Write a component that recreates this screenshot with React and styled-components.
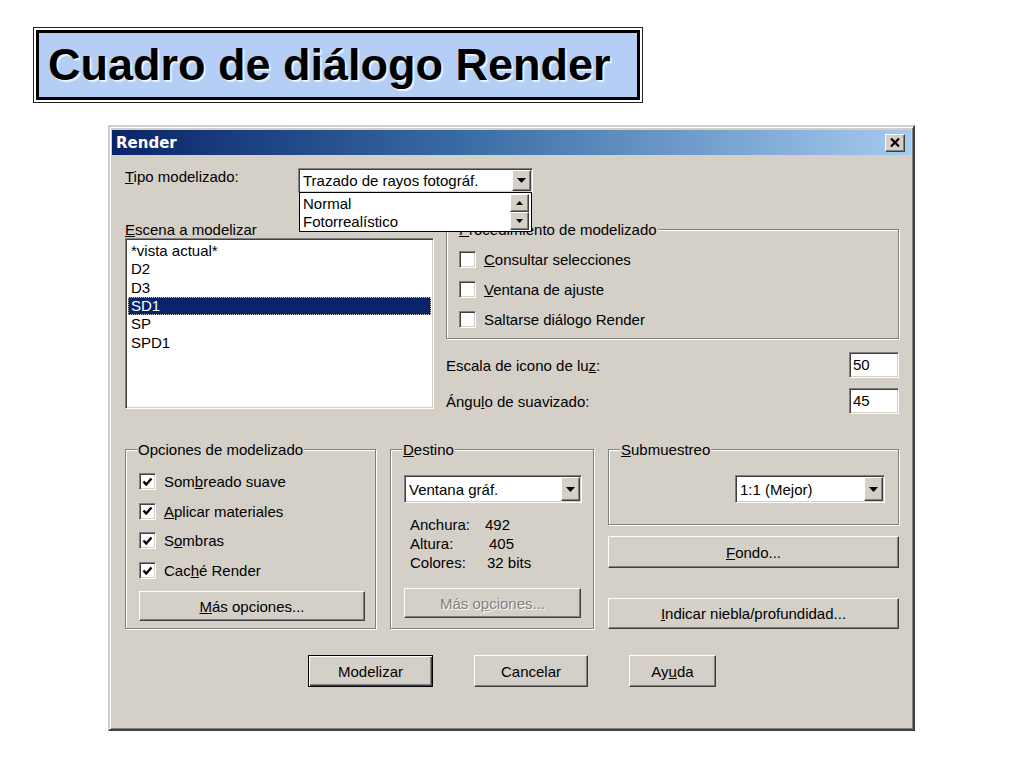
import React from 'react';
import styled, { createGlobalStyle } from 'styled-components';

const FACE = '#d4d0c8';

const GlobalStyle = createGlobalStyle`
  html, body {
    margin: 0;
    padding: 0;
    background: #fff;
  }
  body {
    font-family: "Liberation Sans", Arial, sans-serif;
    color: #000;
  }
`;

const raised = `
  background: ${FACE};
  border: 1px solid;
  border-color: #fff #404040 #404040 #fff;
  box-shadow: inset -1px -1px 0 #808080;
`;

const sunken = `
  background: #fff;
  border: 1px solid;
  border-color: #808080 #fff #fff #808080;
  box-shadow: inset 1px 1px 0 #404040, inset -1px -1px 0 ${FACE};
`;

const Page = styled.div`
  width: 1024px;
  height: 768px;
  overflow: hidden;
  box-sizing: border-box;
  padding: 30px 0 0 36px;
`;

const SlideTitle = styled.h1`
  margin: 0;
  width: 604px;
  height: 70px;
  box-sizing: border-box;
  background: #b4cef6;
  border: 3px solid #000;
  box-shadow: 0 0 0 2px #fff, 0 0 0 3px #222;
  padding: 9px 0 0 9px;
  font: bold 45px/45px "Liberation Sans", Arial, sans-serif;
  color: #000;
  white-space: nowrap;
  text-shadow: 1px 1px 0 #eef4ff, 2px 2px 1px rgba(255, 255, 255, 0.7);
`;

const Window = styled.div`
  margin: 25px 0 0 72px;
  width: 807px;
  height: 606px;
  box-sizing: border-box;
  background: ${FACE};
  border: 2px solid;
  border-color: ${FACE} #404040 #404040 ${FACE};
  box-shadow: inset 1px 1px 0 #fff, inset -1px -1px 0 #808080;
  padding: 2px;
  display: flex;
  flex-direction: column;
  font-size: 15px;
`;

const TitleBar = styled.div`
  height: 25px;
  margin-top: 1px;
  display: flex;
  align-items: center;
  justify-content: space-between;
  padding: 0 6px 0 4px;
  background: linear-gradient(90deg, #0a246a 0%, #3a6ea5 45%, #a6caf0 100%);
`;

const TitleText = styled.span`
  font: bold 15px "DejaVu Sans", Verdana, sans-serif;
  color: #fff;
`;

const CloseButton = styled.div`
  ${raised}
  width: 20px;
  height: 18px;
  box-sizing: border-box;
  display: flex;
  align-items: center;
  justify-content: center;
`;

const Body = styled.div`
  flex: 1;
  display: flex;
  flex-direction: column;
  padding: 13px 12px 0 13px;
`;

const TypeRow = styled.div`
  display: flex;
  align-items: flex-start;
  height: 24px;
`;

const FieldLabel = styled.span`
  display: block;
  line-height: 17px;
  width: ${p => (p.$width ? `${p.$width}px` : 'auto')};
  white-space: nowrap;
`;

const ComboBox = styled.div`
  ${sunken}
  position: relative;
  box-sizing: border-box;
  width: ${p => p.$width}px;
  height: ${p => p.$height}px;
  display: flex;
  padding: 1px;
  flex-shrink: 0;
`;

const ComboText = styled.span`
  flex: 1;
  display: flex;
  align-items: center;
  padding-left: 3px;
  white-space: nowrap;
  overflow: hidden;
`;

const ArrowButton = styled.div`
  ${raised}
  width: 19px;
  box-sizing: border-box;
  display: flex;
  align-items: center;
  justify-content: center;
`;

const DropList = styled.div`
  position: absolute;
  top: 100%;
  left: 0;
  width: 100%;
  height: 40px;
  box-sizing: border-box;
  background: #fff;
  border: 1px solid #000;
  display: flex;
  z-index: 3;
`;

const DropItems = styled.div`
  flex: 1;
  padding: 2px 0 0 3px;
  line-height: 18px;
`;

const ScrollColumn = styled.div`
  width: 19px;
  margin: 1px 2px 1px 0;
  display: flex;
  flex-direction: column;
`;

const ScrollButton = styled.div`
  ${raised}
  flex: 1;
  box-sizing: border-box;
  display: flex;
  align-items: center;
  justify-content: center;
`;

const Columns = styled.div`
  display: flex;
  align-items: flex-start;
  gap: 12px;
`;

const LeftColumn = styled.div`
  width: 309px;
`;

const SectionLabel = styled(FieldLabel)`
  margin-top: 29px;
`;

const ListBox = styled.div`
  ${sunken}
  height: 171px;
  box-sizing: border-box;
  padding: 3px 2px 2px 2px;
`;

const ListItem = styled.div`
  line-height: 18.33px;
  padding-left: 3px;
  white-space: nowrap;
  ${p =>
    p.$selected &&
    `
    background: #0a246a;
    color: #fff;
    outline: 1px dotted #c8c4bc;
    outline-offset: -1px;
  `}
`;

const RightColumn = styled.div`
  flex: 1;
  display: flex;
  flex-direction: column;
`;

const Group = styled.div`
  position: relative;
  box-sizing: border-box;
  height: ${p => p.$height}px;
  margin-top: ${p => p.$top || 0}px;
  border: 1px solid #808080;
  box-shadow: inset 1px 1px 0 #fff, 1px 1px 0 #fff;
  padding: ${p => p.$pad};
  display: flex;
  flex-direction: column;
`;

const GroupLabel = styled.span`
  position: absolute;
  top: -9px;
  left: 11px;
  padding: 0 1px;
  background: ${FACE};
  line-height: 17px;
  white-space: nowrap;
`;

const CheckList = styled.div`
  display: flex;
  flex-direction: column;
  gap: ${p => p.$gap}px;
`;

const CheckRow = styled.label`
  display: flex;
  align-items: center;
  gap: 8px;
  height: 17px;
  white-space: nowrap;
`;

const CheckBox = styled.span`
  ${sunken}
  width: 17px;
  height: 17px;
  box-sizing: border-box;
  display: flex;
  align-items: center;
  justify-content: center;
  flex-shrink: 0;
`;

const ValueRow = styled.div`
  display: flex;
  align-items: center;
  justify-content: space-between;
  margin-top: ${p => p.$top}px;
`;

const NumberField = styled.div`
  ${sunken}
  width: 50px;
  height: 26px;
  box-sizing: border-box;
  padding-left: 3px;
  line-height: 24px;
`;

const BottomGrid = styled.div`
  margin-top: 35px;
  display: grid;
  grid-template-columns: 251px 204px 291px;
  column-gap: 14px;
  align-items: start;
`;

const InfoGrid = styled.div`
  display: grid;
  grid-template-columns: 75px auto;
  line-height: 19px;
  margin: 12px 0 0 6px;
`;

const InfoValue = styled.span`
  padding-left: ${p => p.$shift || 0}px;
`;

const PushButton = styled.div`
  ${raised}
  box-sizing: border-box;
  width: ${p => (p.$width ? `${p.$width}px` : '100%')};
  height: ${p => p.$height}px;
  margin-top: ${p => p.$top || 0}px;
  flex-shrink: 0;
  display: flex;
  align-items: center;
  justify-content: center;
  white-space: nowrap;
  ${p =>
    p.$default &&
    `
    border: 1px solid #000;
    box-shadow: inset 1px 1px 0 #fff, inset -1px -1px 0 #404040, inset -2px -2px 0 #808080;
  `}
  ${p =>
    p.$disabled &&
    `
    color: #808080;
    text-shadow: 1px 1px 0 #fff;
  `}
`;

const SubRow = styled.div`
  display: flex;
  justify-content: flex-end;
`;

const Footer = styled.div`
  margin-top: 26px;
  display: flex;
  justify-content: center;
  gap: 41px;
`;

const DownArrow = () => (
  <svg width="9" height="5" viewBox="0 0 9 5">
    <polygon points="0,0 9,0 4.5,5" fill="#000" />
  </svg>
);

const UpArrow = () => (
  <svg width="7" height="4" viewBox="0 0 7 4">
    <polygon points="0,4 7,4 3.5,0" fill="#000" />
  </svg>
);

const SmallDown = () => (
  <svg width="7" height="4" viewBox="0 0 7 4">
    <polygon points="0,0 7,0 3.5,4" fill="#000" />
  </svg>
);

const CloseGlyph = () => (
  <svg width="10" height="9" viewBox="0 0 10 9">
    <path d="M1 0.5 L9 8.5 M9 0.5 L1 8.5" stroke="#000" strokeWidth="2.2" />
  </svg>
);

const CheckMark = () => (
  <svg width="11" height="10" viewBox="0 0 11 10">
    <path d="M1.5 4.5 L4.2 7.5 L9.5 1.5" fill="none" stroke="#000" strokeWidth="2.4" />
  </svg>
);

function Combo({ width, height, text, children }) {
  return (
    <ComboBox $width={width} $height={height}>
      <ComboText>{text}</ComboText>
      <ArrowButton>
        <DownArrow />
      </ArrowButton>
      {children}
    </ComboBox>
  );
}

function Check({ checked, children }) {
  return (
    <CheckRow>
      <CheckBox>{checked && <CheckMark />}</CheckBox>
      <span>{children}</span>
    </CheckRow>
  );
}

const scenes = ['*vista actual*', 'D2', 'D3', 'SD1', 'SP', 'SPD1'];

export default function App() {
  return (
    <>
      <GlobalStyle />
      <Page>
        <SlideTitle>Cuadro de diálogo Render</SlideTitle>
        <Window>
          <TitleBar>
            <TitleText>Render</TitleText>
            <CloseButton>
              <CloseGlyph />
            </CloseButton>
          </TitleBar>
          <Body>
            <TypeRow>
              <FieldLabel $width={173}>
                <u>T</u>ipo modelizado:
              </FieldLabel>
              <Combo width={235} height={25} text="Trazado de rayos fotográf.">
                <DropList>
                  <DropItems>
                    <div>Normal</div>
                    <div>Fotorrealístico</div>
                  </DropItems>
                  <ScrollColumn>
                    <ScrollButton>
                      <UpArrow />
                    </ScrollButton>
                    <ScrollButton>
                      <SmallDown />
                    </ScrollButton>
                  </ScrollColumn>
                </DropList>
              </Combo>
            </TypeRow>

            <Columns>
              <LeftColumn>
                <SectionLabel>
                  <u>E</u>scena a modelizar
                </SectionLabel>
                <ListBox>
                  {scenes.map(s => (
                    <ListItem key={s} $selected={s === 'SD1'}>
                      {s}
                    </ListItem>
                  ))}
                </ListBox>
              </LeftColumn>

              <RightColumn>
                <Group $top={37} $height={110} $pad="21px 12px 0 12px">
                  <GroupLabel>
                    <u>P</u>rocedimiento de modelizado
                  </GroupLabel>
                  <CheckList $gap={13}>
                    <Check>
                      <u>C</u>onsultar selecciones
                    </Check>
                    <Check>
                      <u>V</u>entana de ajuste
                    </Check>
                    <Check>Saltarse diálogo Render</Check>
                  </CheckList>
                </Group>
                <ValueRow $top={13}>
                  <span>
                    Escala de icono de lu<u>z</u>:
                  </span>
                  <NumberField>50</NumberField>
                </ValueRow>
                <ValueRow $top={10}>
                  <span>
                    Ángu<u>l</u>o de suavizado:
                  </span>
                  <NumberField>45</NumberField>
                </ValueRow>
              </RightColumn>
            </Columns>

            <BottomGrid>
              <Group $height={180} $pad="23px 10px 0 13px">
                <GroupLabel>Opciones de modelizado</GroupLabel>
                <CheckList $gap={12.7}>
                  <Check checked>
                    Som<u>b</u>reado suave
                  </Check>
                  <Check checked>
                    <u>A</u>plicar materiales
                  </Check>
                  <Check checked>
                    S<u>o</u>mbras
                  </Check>
                  <Check checked>
                    Cac<u>h</u>é Render
                  </Check>
                </CheckList>
                <PushButton $height={30} $top={12}>
                  <span>
                    <u>M</u>ás opciones...
                  </span>
                </PushButton>
              </Group>

              <Group $height={180} $pad="25px 12px 0 13px">
                <GroupLabel>
                  <u>D</u>estino
                </GroupLabel>
                <Combo width={178} height={28} text="Ventana gráf." />
                <InfoGrid>
                  <span>Anchura:</span>
                  <InfoValue>492</InfoValue>
                  <span>Altura:</span>
                  <InfoValue $shift={4}>405</InfoValue>
                  <span>Colores:</span>
                  <InfoValue $shift={2}>32 bits</InfoValue>
                </InfoGrid>
                <PushButton $height={30} $top={16} $disabled>
                  <span>
                    Más o<u>p</u>ciones...
                  </span>
                </PushButton>
              </Group>

              <RightColumn>
                <Group $height={76} $pad="25px 13px 0 0">
                  <GroupLabel>
                    <u>S</u>ubmuestreo
                  </GroupLabel>
                  <SubRow>
                    <Combo width={150} height={28} text="1:1 (Mejor)" />
                  </SubRow>
                </Group>
                <PushButton $height={32} $top={11}>
                  <span>
                    <u>F</u>ondo...
                  </span>
                </PushButton>
                <PushButton $height={31} $top={30}>
                  <span>
                    <u>I</u>ndicar niebla/profundidad...
                  </span>
                </PushButton>
              </RightColumn>
            </BottomGrid>

            <Footer>
              <PushButton $width={125} $height={32} $default>
                Modelizar
              </PushButton>
              <PushButton $width={114} $height={32}>
                Cancelar
              </PushButton>
              <PushButton $width={87} $height={32}>
                <span>
                  Ay<u>u</u>da
                </span>
              </PushButton>
            </Footer>
          </Body>
        </Window>
      </Page>
    </>
  );
}
